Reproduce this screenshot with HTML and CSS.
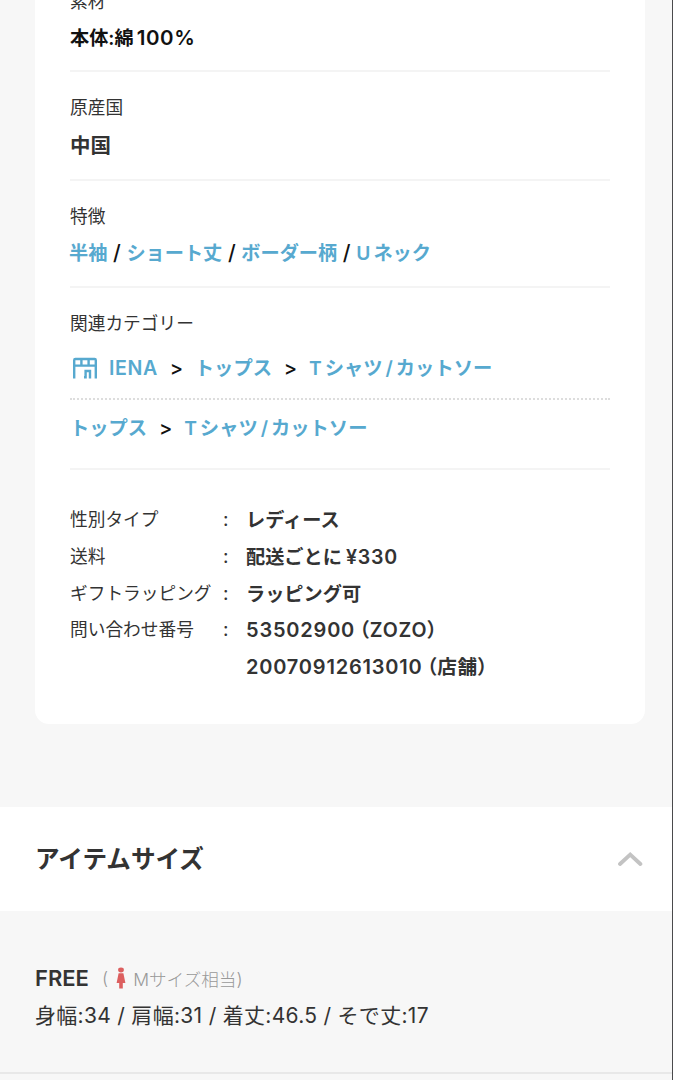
FILE: index.html
```html
<!DOCTYPE html>
<html lang="ja">
<head>
    <meta charset="UTF-8">
    <meta name="viewport" content="width=device-width, initial-scale=1.0">
    <title>アイテム詳細</title>
    <link rel="stylesheet" href="styles.css">
</head>
<body>
    <div class="card">
        <div class="item material">
            <p class="label">素材</p>
            <p class="value">本体:綿<span class="percent">100%</span></p>
        </div>
        <div class="item country">
            <p class="label">原産国</p>
            <p class="value">中国</p>
        </div>
        <div class="item feature">
            <p class="label">特徴</p>
            <p class="value"><a>半袖</a><i>/</i><a>ショート丈</a><i>/</i><a>ボーダー柄</a><i>/</i><a><b>U</b>ネック</a></p>
        </div>
        <div class="item category">
            <p class="label">関連カテゴリー</p>
            <div class="crumbs shop">
                <svg class="shop-icon" viewBox="0 0 26 22" width="26" height="22">
                    <path d="M2.2 21.5V3.2Q2.2 2 3.4 2H22.6Q23.8 2 23.8 3.2V21.5M2.2 8.6H23.8M9.4 2V9.5M16.6 2V9.5M12 20.3H13.6V14H18V21.5" />
                </svg>
                <a class="brand">IENA</a><i>&gt;</i><a>トップス</a><i>&gt;</i><a><b>T</b>シャツ<b class="slash">/</b>カットソー</a>
            </div>
            <div class="crumbs">
                <a>トップス</a><i>&gt;</i><a><b>T</b>シャツ<b class="slash">/</b>カットソー</a>
            </div>
        </div>
        <table class="info">
            <tr><th>性別タイプ</th><td class="colon">:</td><td>レディース</td></tr>
            <tr><th>送料</th><td class="colon">:</td><td>配送ごとに<span class="price">¥330</span></td></tr>
            <tr><th>ギフトラッピング</th><td class="colon">:</td><td>ラッピング可</td></tr>
            <tr><th>問い合わせ番号</th><td class="colon">:</td><td><span class="num">53502900</span><span class="paren">（ZOZO）</span></td></tr>
            <tr><th></th><td class="colon"></td><td><span class="num">20070912613010</span><span class="paren">（店舗）</span></td></tr>
        </table>
    </div>
    <div class="size-title">
        <h2>アイテムサイズ</h2>
        <svg class="arrow" viewBox="0 0 26 16" width="26" height="16">
            <path d="M3 13L13.2 3.5L23.4 13" />
        </svg>
    </div>
    <div class="size">
        <div class="size-name">
            <span class="free">FREE</span>
            <span class="note">(</span>
            <svg class="woman" viewBox="0 0 10 22" width="10" height="22">
                <ellipse cx="5" cy="3" rx="2.9" ry="2.4" />
                <path d="M2.6 6.3H7.4L9.4 16H6.8V21.5H3.2V16H0.6Z" />
            </svg>
            <span class="note">Mサイズ相当)</span>
        </div>
        <p class="measure">身幅:34 / 肩幅:31 / 着丈:46.5 / そで丈:17</p>
    </div>
</body>
</html>
```

FILE: styles.css
```css
*{
    margin: 0;
    padding: 0;
    box-sizing: border-box;
}
body{
    height: 1080px;
    overflow: hidden;
    background-color: #f7f7f7;
    border-right: 1px solid #4a4a4c;
    font-family: Inter, "Noto Sans CJK JP", sans-serif;
    color: #333;
}
i{
    font-style: normal;
    font-weight: 500;
    color: #111;
}
b{
    font-weight: inherit;
}
a{
    color: #57a9cf;
}
.card{
    width: 610px;
    height: 724px;
    margin-left: 35px;
    padding: 0 35px;
    background-color: #fff;
    border-radius: 0 0 14px 14px;
}
.item{
    display: flow-root;
    border-bottom: 2px solid #f4f4f4;
}
.label{
    font-size: 17.7px;
    line-height: 26px;
}
.value{
    display: flex;
    margin-top: 9px;
    font-size: 19.2px;
    font-weight: 600;
    line-height: 30px;
    white-space: nowrap;
}
.material{
    height: 72px;
}
.material .label{
    margin-top: -11px;
}
.material .value{
    margin-top: 8px;
    color: #111;
}
.percent{
    margin-left: 3px;
    font-size: 20.5px;
    letter-spacing: 0.6px;
}
.country{
    height: 109px;
    padding-top: 23px;
}
.country .value{
    margin-top: 10px;
    font-size: 20.5px;
}
.feature{
    height: 107px;
    padding-top: 23px;
}
.feature .value{
    margin-top: 8px;
    margin-left: -1px;
}
.feature i{
    width: 19px;
    font-size: 21px;
    text-align: center;
}
.feature b{
    margin-right: 3px;
}
.category{
    height: 182px;
    padding-top: 23px;
}
.crumbs{
    display: flex;
    align-items: center;
    height: 55px;
    font-size: 19.3px;
    font-weight: 600;
    line-height: 30px;
    white-space: nowrap;
}
.crumbs i{
    width: 37px;
    font-size: 20px;
    text-align: center;
}
.crumbs b{
    margin-right: 3px;
}
.crumbs .slash{
    margin: 0 3px;
}
.shop{
    height: 63px;
    border-bottom: 2px dotted #ddd;
}
.shop-icon{
    margin: 0 11px 0 2px;
    fill: none;
    stroke: #57a9cf;
    stroke-width: 2.4;
}
.brand{
    font-size: 19.6px;
    letter-spacing: 0.6px;
}
.info{
    margin-top: 32px;
    border-collapse: collapse;
    table-layout: fixed;
    width: 540px;
    white-space: nowrap;
}
.info tr{
    height: 36.7px;
}
.info th{
    width: 150px;
    font-size: 17.7px;
    font-weight: 400;
    line-height: 26px;
    text-align: left;
}
.info td{
    font-size: 19.2px;
    font-weight: 600;
    line-height: 26px;
}
.info .colon{
    width: 26px;
    padding: 0 0 2px 3px;
    font-weight: 400;
}
.price{
    margin-left: 4px;
    font-size: 19.6px;
    letter-spacing: 0.8px;
}
.num{
    font-size: 20px;
    letter-spacing: 0.8px;
}
.paren{
    margin-left: 4px;
    font-size: 19.6px;
    letter-spacing: 0.8px;
    font-feature-settings: "palt";
}
.size-title{
    display: flex;
    align-items: center;
    justify-content: space-between;
    height: 104px;
    margin-top: 83px;
    padding: 0 29px 0 35px;
    background-color: #fff;
}
.size-title h2{
    font-size: 24.6px;
    font-weight: 600;
    line-height: 36px;
}
.arrow{
    fill: none;
    stroke: #c3c3c3;
    stroke-width: 3.8;
    stroke-linecap: round;
}
.size{
    height: 163px;
    padding: 51px 35px 0;
    border-bottom: 2px solid #e8e8e8;
}
.size-name{
    display: flex;
    align-items: center;
    height: 32px;
}
.free{
    width: 67px;
    font-size: 22px;
    font-weight: 600;
}
.note{
    font-size: 17.6px;
    font-weight: 300;
    color: #999;
}
.woman{
    margin: 0 7px 0 8px;
    fill: #dc5f5f;
}
.measure{
    margin-top: 6px;
    font-size: 21px;
    line-height: 32px;
    letter-spacing: 0.3px;
    white-space: nowrap;
}
```
